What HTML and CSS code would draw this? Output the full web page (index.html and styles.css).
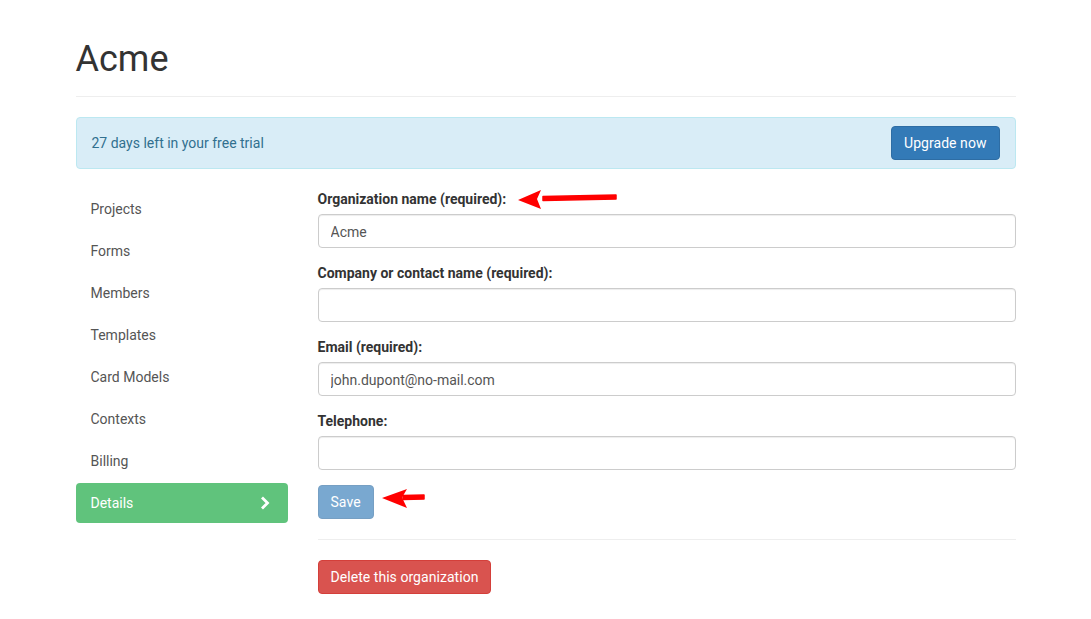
FILE: index.html
```
<!DOCTYPE html>
<html>
	<head>
		<meta charset="UTF-8">
		<title>Acme</title>
		<link rel="stylesheet" href="styles.css">
	</head>
	<body>
		<div class="container">
			<div class="page-header">
				<h1>Acme</h1>
			</div>
			<div class="alert">
				<span>27 days left in your free trial</span>
				<button class="btn btn-primary">Upgrade now</button>
			</div>
			<div class="row">
				<ul class="nav">
					<li><a href="#">Projects</a></li>
					<li><a href="#">Forms</a></li>
					<li><a href="#">Members</a></li>
					<li><a href="#">Templates</a></li>
					<li><a href="#">Card Models</a></li>
					<li><a href="#">Contexts</a></li>
					<li><a href="#">Billing</a></li>
					<li class="active">
						<a href="#">Details
							<svg class="chevron" width="10" height="14" viewBox="0 0 10 14"><path d="M2 1.5 L7.5 7 L2 12.5" fill="none" stroke="#fff" stroke-width="2.8"/></svg>
						</a>
					</li>
				</ul>
				<div class="main">
					<form>
						<div class="form-group">
							<label>Organization name (required):</label>
							<input type="text" value="Acme">
							<svg class="arrow arrow-org" width="104" height="22" viewBox="0 0 104 22"><path d="M26 7.5 L99 6 L99 10 L26 11.5 Z" fill="#f00" stroke="#f00" stroke-width="1.5" stroke-linejoin="round"/><path d="M1 11 L24 1 L20 10 L24 20 Z" fill="#f00"/></svg>
						</div>
						<div class="form-group">
							<label>Company or contact name (required):</label>
							<input type="text" value="">
						</div>
						<div class="form-group">
							<label>Email (required):</label>
							<input type="text" value="john.dupont@no-mail.com">
						</div>
						<div class="form-group">
							<label>Telephone:</label>
							<input type="text" value="">
						</div>
						<div class="save-wrap">
							<button type="button" class="btn btn-primary disabled">Save</button>
							<svg class="arrow arrow-save" width="48" height="22" viewBox="0 0 48 22"><path d="M22 8.5 L43 8 L43 12 L22 12.5 Z" fill="#f00" stroke="#f00" stroke-width="1.5" stroke-linejoin="round"/><path d="M1 11 L26 2 L21 10.5 L26 21 Z" fill="#f00"/></svg>
						</div>
					</form>
					<hr>
					<button class="btn btn-danger">Delete this organization</button>
				</div>
			</div>
		</div>
	</body>
</html>
```

FILE: styles.css
```
*{
	box-sizing: border-box;
}
body{
	margin: 0;
	font-family: Roboto, "Liberation Sans", sans-serif;
	font-size: 14px;
	line-height: 20px;
	color: #333;
	background: #fff;
}
.container{
	width: 940px;
	margin: 0 auto;
	padding-top: 39px;
}
.page-header{
	border-bottom: 1px solid #eee;
	padding-bottom: 17px;
	margin-bottom: 20px;
}
h1{
	margin: 0;
	font-size: 36px;
	line-height: 40px;
	font-weight: 400;
	color: #333;
}
.alert{
	display: flex;
	justify-content: space-between;
	align-items: center;
	padding: 8px 15px;
	background: #d9edf7;
	border: 1px solid #bce8f1;
	border-radius: 4px;
	color: #31708f;
	margin-bottom: 20px;
}
.btn{
	font-family: inherit;
	font-size: 14px;
	line-height: 20px;
	padding: 6px 12px;
	border: 1px solid transparent;
	border-radius: 4px;
	color: #fff;
	letter-spacing: .05px;
	cursor: pointer;
}
.btn-primary{
	background: #337ab7;
	border-color: #2e6da4;
}
.btn.disabled{
	opacity: .65;
	cursor: not-allowed;
}
.btn-danger{
	background: #d9534f;
	border-color: #d43f3a;
}
.row{
	display: flex;
	gap: 30px;
}
.nav{
	list-style: none;
	margin: 0;
	padding: 0;
	width: 212px;
	flex: none;
	display: flex;
	flex-direction: column;
	gap: 2px;
}
.nav a{
	display: flex;
	justify-content: space-between;
	align-items: center;
	padding: 10px 15px;
	color: #555;
	text-decoration: none;
	border-radius: 4px;
}
.nav .active a{
	background: #60c37c;
	color: #fff;
}
.chevron{
	margin-right: 3px;
}
.main{
	flex: 1;
}
.form-group{
	position: relative;
	margin-bottom: 15px;
}
label{
	display: block;
	font-weight: 700;
	margin-bottom: 5px;
}
input{
	display: block;
	width: 100%;
	height: 34px;
	padding: 7px 12px 5px;
	font-family: inherit;
	font-size: 14px;
	color: #555;
	border: 1px solid #ccc;
	border-radius: 4px;
	box-shadow: inset 0 1px 1px rgba(0,0,0,.075);
}
.save-wrap{
	position: relative;
	margin-top: 1px;
}
.arrow{
	position: absolute;
}
.arrow-org{
	left: 199px;
	top: 0;
}
.arrow-save{
	left: 63px;
	top: 2px;
}
hr{
	border: 0;
	border-top: 1px solid #eee;
	margin: 20px 0;
}
```
